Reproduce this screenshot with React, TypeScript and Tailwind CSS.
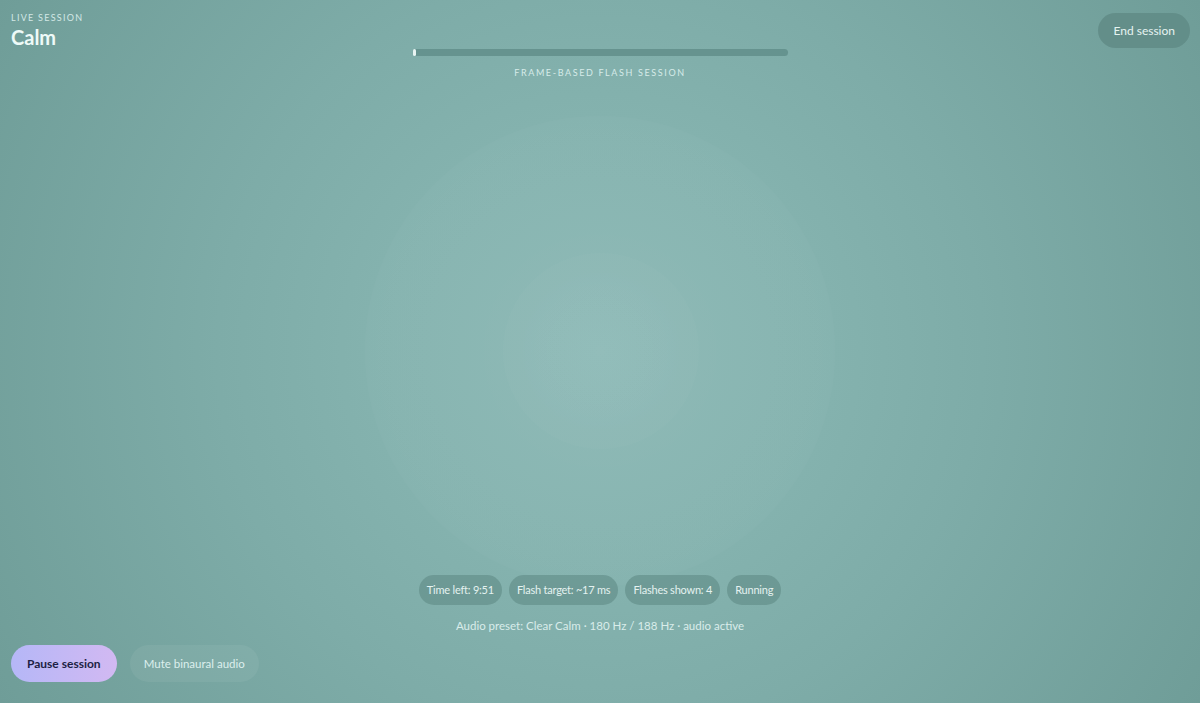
const pills = ["Time left: 9:51", "Flash target: ~17 ms", "Flashes shown: 4", "Running"];

export default function App() {
  const progress = 1;

  return (
    <div
      className="relative h-[703px] w-full overflow-hidden bg-[radial-gradient(circle_at_50%_50%,#8bb8b5_0%,#85b3af_30%,#7eaca8_55%,#6f9d98_100%)] text-white flex flex-col"
      style={{ fontFamily: "Lato, 'Noto Sans', sans-serif" }}
    >
      {/* breathing rings */}
      <div className="pointer-events-none absolute left-[365px] top-[116px] h-[470px] w-[470px] rounded-full bg-[radial-gradient(circle,rgba(255,255,255,0.04)_0%,rgba(255,255,255,0.02)_70%,rgba(255,255,255,0)_100%)]" />
      <div className="pointer-events-none absolute left-[503px] top-[253px] h-[196px] w-[196px] rounded-full bg-[radial-gradient(circle,rgba(255,255,255,0.03)_0%,rgba(255,255,255,0.015)_80%,rgba(255,255,255,0)_100%)]" />

      <header className="relative grid grid-cols-[1fr_375px_1fr] items-start px-[11px] pt-[12px]">
        <div className="flex flex-col">
          <span className="text-[9px] tracking-[0.14em] uppercase text-[#d3e8e6] leading-[12px]">Live session</span>
          <h1 className="text-[20px] font-bold leading-[26px] text-[#eefaf8]">Calm</h1>
        </div>
        <div className="flex flex-col items-center pt-[37px]">
          <div className="relative h-[7px] w-full rounded-full bg-[#5f8c88]/80">
            <div className="h-full rounded-full bg-[#e8f4f2]" style={{ width: `${progress}%` }} />
          </div>
          <span className="mt-[10px] text-[9px] tracking-[0.18em] uppercase text-[#d6ebe9]">Frame-based flash session</span>
        </div>
        <div className="flex justify-end">
          <button className="mt-[1px] mr-[-1px] h-[35px] rounded-full bg-[#5f8985]/80 px-[15px] text-[12px] text-[#e6f3f1]">End session</button>
        </div>
      </header>

      <div className="flex-1" />

      <section className="relative flex flex-col items-center">
        <div className="flex gap-[7px]">
          {pills.map((p) => (
            <span key={p} className="h-[30px] flex items-center rounded-full bg-[#5f8a86]/60 px-[8px] text-[11px] tracking-[-0.02em] text-[#e4f2f0]">
              {p}
            </span>
          ))}
        </div>
        <p className="mt-[12px] text-[11.5px] text-[#d9ecea]">Audio preset: Clear Calm · 180 Hz / 188 Hz · audio active</p>
      </section>

      <footer className="relative flex gap-[13px] px-[11px] pt-[11px] pb-[21px]">
        <button className="h-[37px] rounded-full bg-[linear-gradient(90deg,#b5b7f7,#d2b9f2)] px-[16px] text-[12px] font-bold text-[#1d1f44]">Pause session</button>
        <button className="h-[37px] rounded-full bg-white/[0.06] px-[14px] text-[11.5px] text-[#dcefed]">Mute binaural audio</button>
      </footer>
    </div>
  );
}
